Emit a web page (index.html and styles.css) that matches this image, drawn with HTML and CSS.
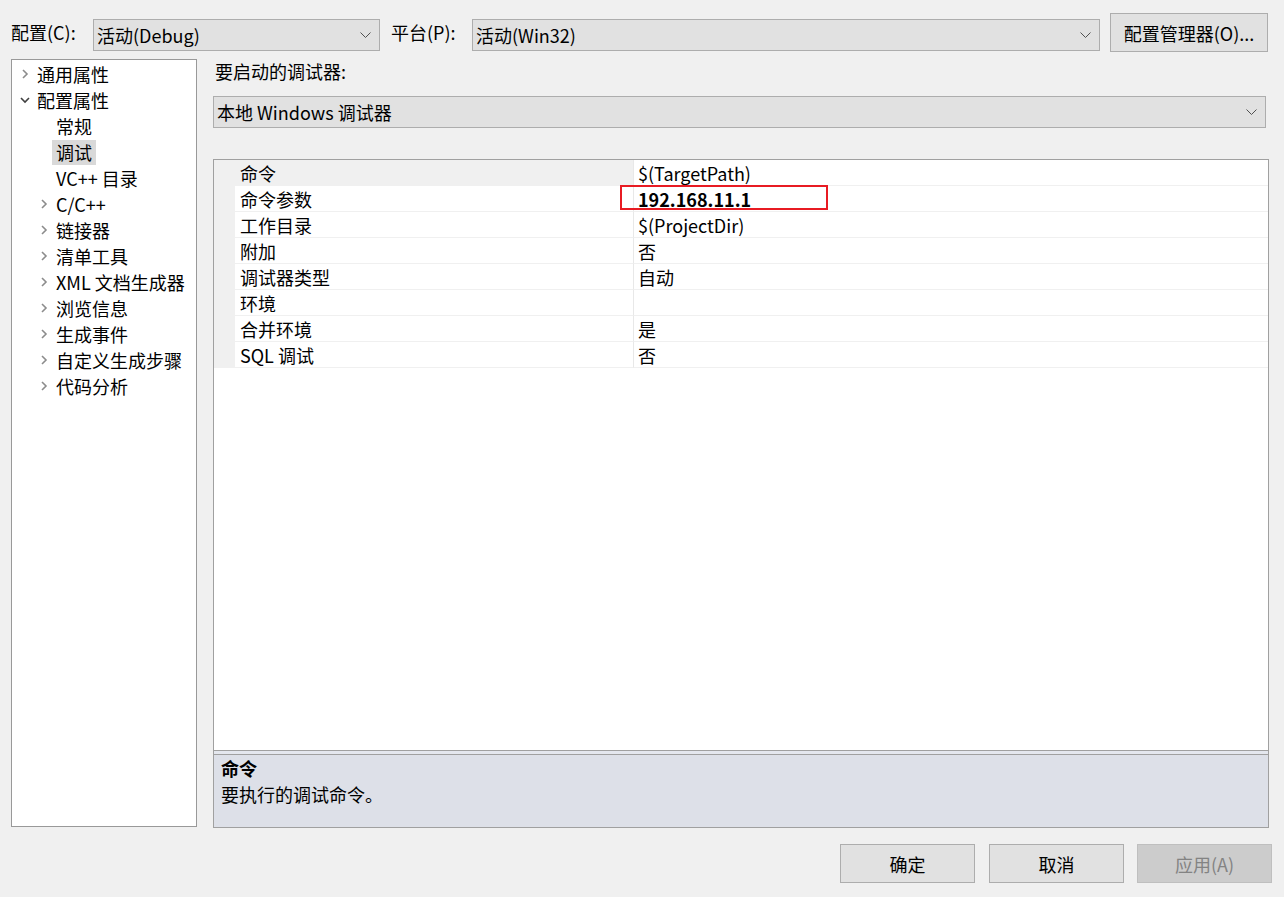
FILE: index.html
```html
<!DOCTYPE html>
<html lang="zh-CN">
<head>
    <meta charset="UTF-8">
    <title>调试 属性页</title>
    <link rel="stylesheet" href="styles.css">
</head>
<body>
    <div class="dialog">
        <div class="toolbar">
            <span class="field-label">配置(C):</span>
            <div class="combo combo-config">
                <span>活动(Debug)</span>
                <svg class="combo-arrow" width="11" height="6" viewBox="0 0 11 6"><path d="M0.5 0.5 L5.5 5.5 L10.5 0.5" /></svg>
            </div>
            <span class="field-label field-label-platform">平台(P):</span>
            <div class="combo combo-platform">
                <span>活动(Win32)</span>
                <svg class="combo-arrow" width="11" height="6" viewBox="0 0 11 6"><path d="M0.5 0.5 L5.5 5.5 L10.5 0.5" /></svg>
            </div>
            <button class="btn btn-manager">配置管理器(O)...</button>
        </div>

        <div class="main">
            <div class="tree">
                <div class="tree-row">
                    <svg class="tree-arrow collapsed" width="10" height="10" viewBox="0 0 10 10"><path d="M3 1 L7 5 L3 9" /></svg>
                    <span class="tree-label">通用属性</span>
                </div>
                <div class="tree-row">
                    <svg class="tree-arrow expanded" width="10" height="10" viewBox="0 0 10 10"><path d="M1 3 L5 7 L9 3" /></svg>
                    <span class="tree-label">配置属性</span>
                </div>
                <div class="tree-row child">
                    <span class="tree-arrow"></span>
                    <span class="tree-label">常规</span>
                </div>
                <div class="tree-row child">
                    <span class="tree-arrow"></span>
                    <span class="tree-label selected">调试</span>
                </div>
                <div class="tree-row child">
                    <span class="tree-arrow"></span>
                    <span class="tree-label">VC++ 目录</span>
                </div>
                <div class="tree-row child">
                    <svg class="tree-arrow collapsed" width="10" height="10" viewBox="0 0 10 10"><path d="M3 1 L7 5 L3 9" /></svg>
                    <span class="tree-label">C/C++</span>
                </div>
                <div class="tree-row child">
                    <svg class="tree-arrow collapsed" width="10" height="10" viewBox="0 0 10 10"><path d="M3 1 L7 5 L3 9" /></svg>
                    <span class="tree-label">链接器</span>
                </div>
                <div class="tree-row child">
                    <svg class="tree-arrow collapsed" width="10" height="10" viewBox="0 0 10 10"><path d="M3 1 L7 5 L3 9" /></svg>
                    <span class="tree-label">清单工具</span>
                </div>
                <div class="tree-row child">
                    <svg class="tree-arrow collapsed" width="10" height="10" viewBox="0 0 10 10"><path d="M3 1 L7 5 L3 9" /></svg>
                    <span class="tree-label">XML 文档生成器</span>
                </div>
                <div class="tree-row child">
                    <svg class="tree-arrow collapsed" width="10" height="10" viewBox="0 0 10 10"><path d="M3 1 L7 5 L3 9" /></svg>
                    <span class="tree-label">浏览信息</span>
                </div>
                <div class="tree-row child">
                    <svg class="tree-arrow collapsed" width="10" height="10" viewBox="0 0 10 10"><path d="M3 1 L7 5 L3 9" /></svg>
                    <span class="tree-label">生成事件</span>
                </div>
                <div class="tree-row child">
                    <svg class="tree-arrow collapsed" width="10" height="10" viewBox="0 0 10 10"><path d="M3 1 L7 5 L3 9" /></svg>
                    <span class="tree-label">自定义生成步骤</span>
                </div>
                <div class="tree-row child">
                    <svg class="tree-arrow collapsed" width="10" height="10" viewBox="0 0 10 10"><path d="M3 1 L7 5 L3 9" /></svg>
                    <span class="tree-label">代码分析</span>
                </div>
            </div>

            <div class="content">
                <div class="content-label">要启动的调试器:</div>
                <div class="combo combo-debugger">
                    <span>本地 Windows 调试器</span>
                    <svg class="combo-arrow" width="11" height="6" viewBox="0 0 11 6"><path d="M0.5 0.5 L5.5 5.5 L10.5 0.5" /></svg>
                </div>

                <div class="grid">
                    <div class="grid-rows">
                        <div class="prop-row active">
                            <div class="prop-margin"></div>
                            <div class="prop-name">命令</div>
                            <div class="prop-value">$(TargetPath)</div>
                        </div>
                        <div class="prop-row">
                            <div class="prop-margin"></div>
                            <div class="prop-name">命令参数</div>
                            <div class="prop-value bold">192.168.11.1<span class="mark-box"></span></div>
                        </div>
                        <div class="prop-row">
                            <div class="prop-margin"></div>
                            <div class="prop-name">工作目录</div>
                            <div class="prop-value">$(ProjectDir)</div>
                        </div>
                        <div class="prop-row">
                            <div class="prop-margin"></div>
                            <div class="prop-name">附加</div>
                            <div class="prop-value">否</div>
                        </div>
                        <div class="prop-row">
                            <div class="prop-margin"></div>
                            <div class="prop-name">调试器类型</div>
                            <div class="prop-value">自动</div>
                        </div>
                        <div class="prop-row">
                            <div class="prop-margin"></div>
                            <div class="prop-name">环境</div>
                            <div class="prop-value"></div>
                        </div>
                        <div class="prop-row">
                            <div class="prop-margin"></div>
                            <div class="prop-name">合并环境</div>
                            <div class="prop-value">是</div>
                        </div>
                        <div class="prop-row">
                            <div class="prop-margin"></div>
                            <div class="prop-name">SQL 调试</div>
                            <div class="prop-value">否</div>
                        </div>
                    </div>
                    <div class="splitter"></div>
                    <div class="description">
                        <div class="description-title">命令</div>
                        <div>要执行的调试命令。</div>
                    </div>
                </div>
            </div>
        </div>

        <div class="footer">
            <button class="btn btn-footer">确定</button>
            <button class="btn btn-footer">取消</button>
            <button class="btn btn-footer" disabled>应用(A)</button>
        </div>
    </div>
</body>
</html>
```

FILE: styles.css
```css
:root {
    --window-bg: #f0f0f0;
    --control-bg: #e1e1e1;
    --control-border: #adadad;
    --grid-border: #a0a0a0;
    --grid-line: #f0f0f0;
}

body {
    margin: 0;
    background-color: var(--window-bg);
    font-family: "Noto Sans CJK SC", "Microsoft YaHei", sans-serif;
    font-size: 18px;
    color: #000;
    width: 1284px;
    height: 897px;
    overflow: hidden;
}

.dialog {
    display: flex;
    flex-direction: column;
}

/* top bar */
.toolbar {
    display: flex;
    align-items: flex-start;
    padding: 13px 0 0 11px;
    height: 39px;
}

.field-label {
    width: 82px;
    margin-top: 6px;
    line-height: 26px;
    white-space: nowrap;
}

.field-label-platform {
    width: 81px;
    margin-left: 11px;
}

.combo {
    box-sizing: border-box;
    height: 32px;
    margin-top: 6px;
    padding: 0 8px 0 3px;
    display: flex;
    align-items: center;
    justify-content: space-between;
    background-color: var(--control-bg);
    border: 1px solid var(--control-border);
    line-height: 30px;
    white-space: nowrap;
}

.combo-config {
    width: 287px;
}

.combo-platform {
    width: 628px;
}

.combo-arrow path {
    fill: none;
    stroke: #505050;
    stroke-width: 1;
}

.btn {
    box-sizing: border-box;
    font-family: inherit;
    font-size: 18px;
    color: #000;
    background-color: var(--control-bg);
    border: 1px solid var(--control-border);
    padding: 0;
    height: 39px;
}

.btn-manager {
    width: 158px;
    margin-left: 10px;
}

.btn:disabled {
    background-color: #cccccc;
    border-color: #bfbfbf;
    color: #838383;
}

/* main area */
.main {
    display: flex;
    gap: 16px;
    margin-top: 7px;
    padding-left: 11px;
}

.tree {
    box-sizing: border-box;
    width: 186px;
    height: 768px;
    padding-top: 1px;
    background-color: #fff;
    border: 1px solid #999;
}

.tree-row {
    display: flex;
    align-items: center;
    height: 26px;
    padding-left: 8px;
}

.tree-row.child {
    padding-left: 27px;
}

.tree-arrow {
    width: 10px;
    height: 10px;
    margin-right: 3px;
    flex-shrink: 0;
}

.tree-arrow path {
    fill: none;
    stroke-width: 1.6;
}

.tree-arrow.collapsed path {
    stroke: #8c8c8c;
}

.tree-arrow.expanded path {
    stroke: #404040;
}

.tree-label {
    padding: 0 4px;
    line-height: 25px;
    white-space: nowrap;
}

.tree-label.selected {
    background-color: #d9d9d9;
}

.content {
    width: 1056px;
    display: flex;
    flex-direction: column;
}

.content-label {
    line-height: 24px;
    padding-left: 2px;
}

.combo-debugger {
    width: 1053px;
    margin-top: 13px;
}

/* property grid */
.grid {
    box-sizing: border-box;
    margin-top: 31px;
    height: 669px;
    border: 1px solid var(--grid-border);
    display: flex;
    flex-direction: column;
}

.grid-rows {
    flex: 1;
    background-color: #fff;
    border-bottom: 1px solid var(--grid-border);
}

.prop-row {
    display: grid;
    grid-template-columns: 21px 398px 1fr;
    height: 26px;
}

.prop-margin {
    background-color: var(--grid-line);
}

.prop-name,
.prop-value {
    padding-top: 2px;
    line-height: 23px;
    border-bottom: 1px solid var(--grid-line);
    white-space: nowrap;
}

.prop-name {
    padding-left: 5px;
}

.prop-row.active .prop-name {
    background-color: var(--grid-line);
}

.prop-value {
    position: relative;
    padding-left: 4px;
    border-left: 1px solid #e8e8e8;
}

.prop-value.bold {
    font-weight: 700;
}

.mark-box {
    position: absolute;
    left: -14px;
    top: -1px;
    width: 208px;
    height: 25px;
    box-sizing: border-box;
    border: 2px solid #e81b23;
}

.splitter {
    height: 3px;
    background-color: #e4e7ee;
}

.description {
    box-sizing: border-box;
    height: 73px;
    padding: 0 7px;
    border-top: 1px solid var(--grid-border);
    background-color: #dde0e8;
    line-height: 26px;
}

.description-title {
    font-weight: 700;
}

/* bottom buttons */
.footer {
    display: flex;
    justify-content: flex-end;
    gap: 14px;
    margin-top: 16px;
    padding-right: 12px;
}

.btn-footer {
    width: 135px;
}

.btn-footer:last-child {
    margin-left: -1px;
}
```
